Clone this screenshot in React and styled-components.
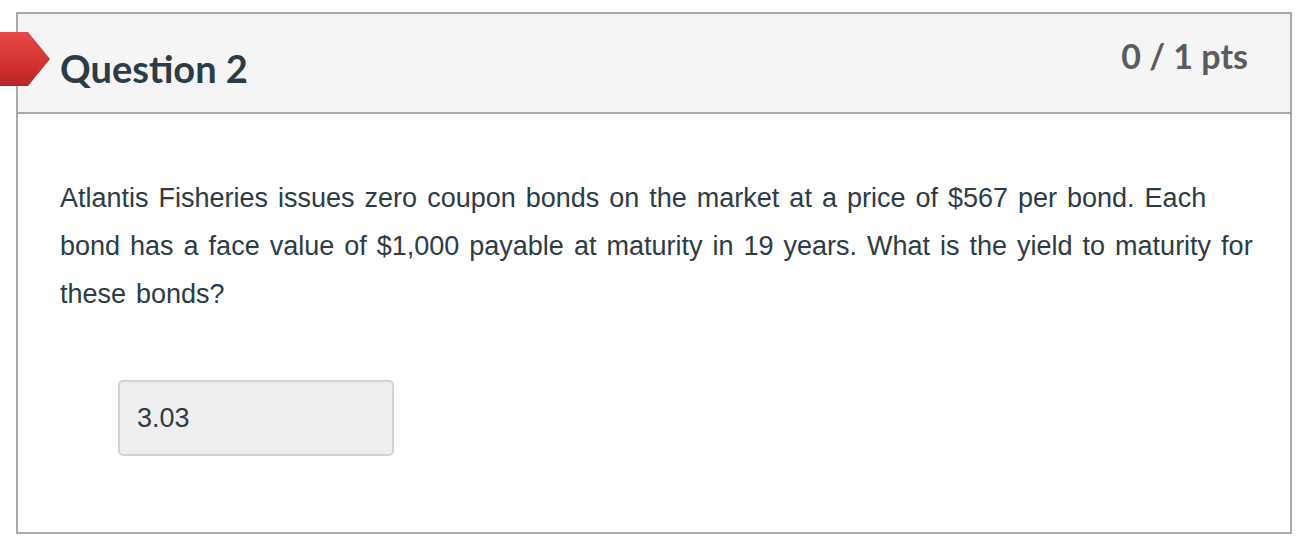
import React from 'react';
import styled, { createGlobalStyle } from 'styled-components';

const GlobalStyle = createGlobalStyle`
  body {
    margin: 0;
    background: #fff;
  }
`;

const Page = styled.div`
  padding: 12px 10px 0 16px;
  width: 1302px;
  box-sizing: border-box;
`;

const Card = styled.div`
  position: relative;
  border: 2px solid #aaaaaa;
  height: 522px;
  box-sizing: border-box;
  display: flex;
  flex-direction: column;
`;

const Header = styled.div`
  height: 100px;
  box-sizing: border-box;
  background: #f5f5f5;
  border-bottom: 2px solid #aaaaaa;
  display: flex;
  justify-content: space-between;
  align-items: flex-start;
  padding: 0 42px 0 42px;
`;

const Title = styled.h2`
  margin: 0;
  padding-top: 31px;
  font-family: Lato, "Liberation Sans", sans-serif;
  font-weight: 700;
  font-size: 38px;
  line-height: 46px;
  color: #2d3b45;
`;

const Points = styled.div`
  padding-top: 22px;
  font-family: Lato, "Liberation Sans", sans-serif;
  font-weight: 700;
  font-size: 34px;
  line-height: 40px;
  color: #5b5b5b;
`;

const Flag = styled.div`
  position: absolute;
  left: -18px;
  top: 18px;
  width: 50px;
  height: 54px;
  background: linear-gradient(180deg, #e54a48 0%, #d23232 60%, #b82424 100%);
  clip-path: polygon(0 0, 28px 0, 50px 50%, 28px 100%, 0 100%);
`;

const Body = styled.div`
  padding: 60px 30px 0 42px;
`;

const Text = styled.p`
  margin: 0;
  font-family: "Liberation Sans", Arial, sans-serif;
  font-size: 27px;
  line-height: 48px;
  word-spacing: 2.5px;
  white-space: nowrap;
  color: #2d3b45;
`;

const Answer = styled.div`
  margin: 62px 0 0 58px;
  width: 276px;
  height: 76px;
  box-sizing: border-box;
  background: #eeeeee;
  border: 2px solid #d2d2d2;
  border-radius: 5px;
  display: flex;
  align-items: center;
  padding-left: 17px;
  font-family: "Liberation Sans", Arial, sans-serif;
  font-size: 27px;
  color: #2d3b45;
`;

export default function App() {
  return (
    <Page>
      <GlobalStyle />
      <Card>
        <Flag />
        <Header>
          <Title>Question 2</Title>
          <Points>0 / 1 pts</Points>
        </Header>
        <Body>
          <Text>
            Atlantis Fisheries issues zero coupon bonds on the market at a price of $567 per bond. Each
            <br />
            bond has a face value of $1,000 payable at maturity in 19 years. What is the yield to maturity for
            <br />
            these bonds?
          </Text>
          <Answer>3.03</Answer>
        </Body>
      </Card>
    </Page>
  );
}
